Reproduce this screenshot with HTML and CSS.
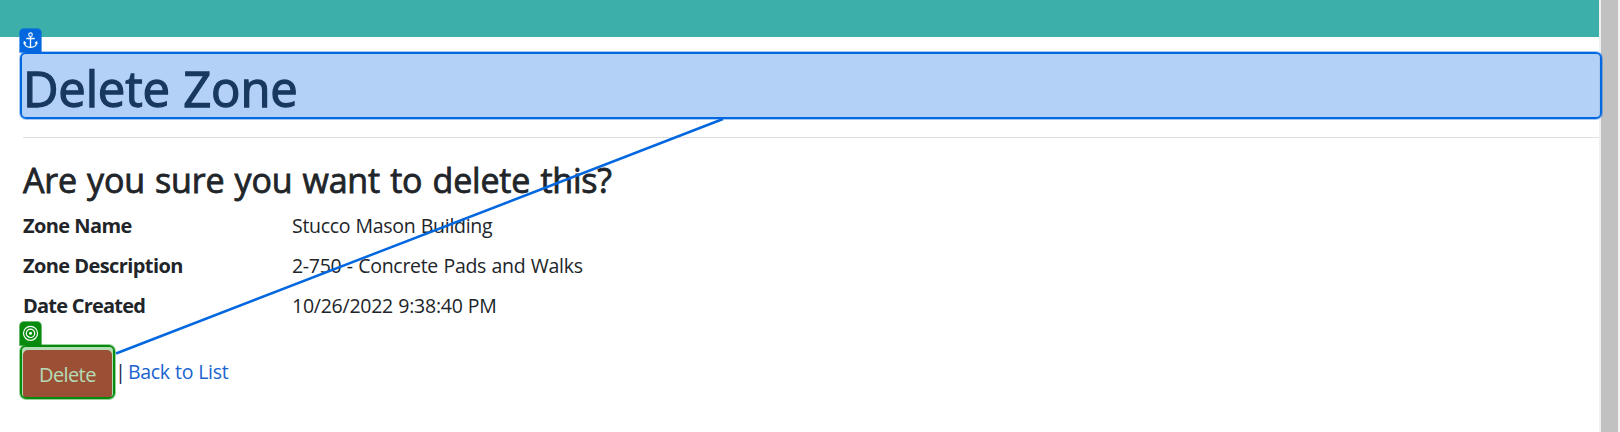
FILE: index.html
```
<!DOCTYPE html>
<html lang="en">
<head>
<meta charset="utf-8">
<title>Delete Zone</title>
<link rel="stylesheet" href="styles.css">
</head>
<body>
<div class="window">
  <div class="page">
    <header class="topbar"></header>
    <main class="content">
      <h1 class="title"><span>Delete Zone</span></h1>
      <hr class="rule">
      <h3 class="question"><span>Are you sure you want to delete this?</span></h3>
      <dl class="details">
        <dt><span class="k1">Zone Name</span></dt><dd><span class="v1">Stucco Mason Building</span></dd>
        <dt><span class="k2">Zone Description</span></dt><dd><span class="v2">2-750 - Concrete Pads and Walks</span></dd>
        <dt><span class="k3">Date Created</span></dt><dd><span class="v3">10/26/2022 9:38:40 PM</span></dd>
      </dl>
      <div class="actions">
        <button class="delete"><span>Delete</span></button>
        <span class="bar">|</span>
        <a class="back">Back to List</a>
      </div>
    </main>
  </div>
  <div class="scrollbar"></div>
</div>
<svg class="connector" width="1620" height="432" viewBox="0 0 1620 432"><path d="M116 353.5 723 119" fill="none" stroke="#0368e0" stroke-width="2.5"/></svg>
<div class="outline anchor-outline"></div>
<div class="tag anchor-tag">
  <svg width="22" height="23" viewBox="0 0 22 23" fill="none" stroke="#fff" stroke-width="1.1"><circle cx="10.5" cy="5.7" r="1.8"/><path d="M10.5 7.5V18.5M6.3 9.5H14.7" stroke-width="1.3"/><path d="M4.3 13C4.5 16.6 7.1 18.4 10.5 18.4S16.5 16.6 16.7 13M3.9 15.2 4.3 12.8 6.1 14.4M14.9 14.4 16.7 12.8 17.1 15.2"/></svg>
</div>
<div class="outline target-outline"></div>
<div class="tag target-tag">
  <svg width="22" height="23" viewBox="0 0 22 23" fill="none" stroke="#fff" stroke-width="1.2"><circle cx="10.5" cy="11.3" r="7"/><circle cx="10.5" cy="11.3" r="4.2"/><circle cx="10.5" cy="11.3" r="1.5" fill="#fff" stroke="none"/></svg>
</div>
</body>
</html>
```
FILE: styles.css
```
* { box-sizing: border-box; }
body { margin: 0; width: 1620px; height: 432px; overflow: hidden; position: relative; background: #fff; color: #212529; font: 20px/30px "Open Sans", "Noto Sans", sans-serif; }
.window { display: flex; height: 432px; }
.page { width: 1599px; }
.topbar { height: 37px; background: #3cafaa; }
.content { padding: 18px 0 0 23px; }
.title { margin: 0; height: 62px; font-size: 49px; line-height: 67px; font-weight: 500; letter-spacing: -.2px; word-spacing: 1px; -webkit-text-stroke: 1.3px #212529; }
.rule { margin: 20px 0 0; border: 0; height: 1px; background: #dfdfdf; }
.question { margin: 17px 0 0; height: 55px; font-size: 34px; line-height: 50px; font-weight: 500; letter-spacing: -.2px; word-spacing: 1.6px; -webkit-text-stroke: .8px #212529; }
.details { display: grid; grid-template-columns: 269px 1fr; grid-auto-rows: 40px; margin: 1px 0 0; }
.details dt { font-weight: 700; }
.details dd { margin: 0; font-size: 19.5px; }
.details span, .title span, .question span { white-space: nowrap; }
.k1, .k2 { letter-spacing: -.58px; }
.k3 { letter-spacing: -.78px; }
.v1 { letter-spacing: -.3px; word-spacing: .6px; }
.v2 { letter-spacing: -.3px; word-spacing: .7px; }
.v3 { letter-spacing: -.25px; word-spacing: .5px; }
.actions { display: flex; height: 49px; margin-top: 19px; }
.delete { width: 89px; height: 49px; padding: 0 0 0 16px; border: 0; border-radius: 5px; background: #dc3545; color: #fff; font: inherit; letter-spacing: -.6px; text-align: left; white-space: nowrap; }
.bar { width: 16px; padding-left: 3px; line-height: 44px; color: #212549; }
.back { color: #1a63d0; line-height: 44px; font-size: 19.5px; letter-spacing: -.3px; word-spacing: .4px; }
.scrollbar { width: 21px; background: #c1c1c1; border-left: 2px solid #f0f0f0; border-right: 2px solid #f1f1f1; }
.connector { position: absolute; left: 0; top: 0; }
.outline { position: absolute; border-radius: 6px; background-clip: padding-box; }
.anchor-outline { left: 20px; top: 52px; width: 1582px; height: 67px; border: 2px solid #0368e0; background-color: rgba(3, 104, 224, .3); box-shadow: 0 0 0 1px rgba(3, 104, 224, .35); }
.target-outline { left: 20px; top: 345px; width: 95px; height: 54px; border: 2px solid #078b0d; background-color: rgba(7, 139, 13, .3); box-shadow: 0 0 0 1px rgba(7, 139, 13, .4); }
.tag { position: absolute; left: 20px; width: 21px; height: 23px; border-radius: 4px 4px 0 0; }
.tag svg { display: block; }
.anchor-tag { top: 29px; background: #0368e0; box-shadow: 0 0 0 1px rgba(3, 104, 224, .6); }
.target-tag { top: 322px; background: #078b0d; box-shadow: 0 0 0 1px rgba(7, 139, 13, .6); }
```
